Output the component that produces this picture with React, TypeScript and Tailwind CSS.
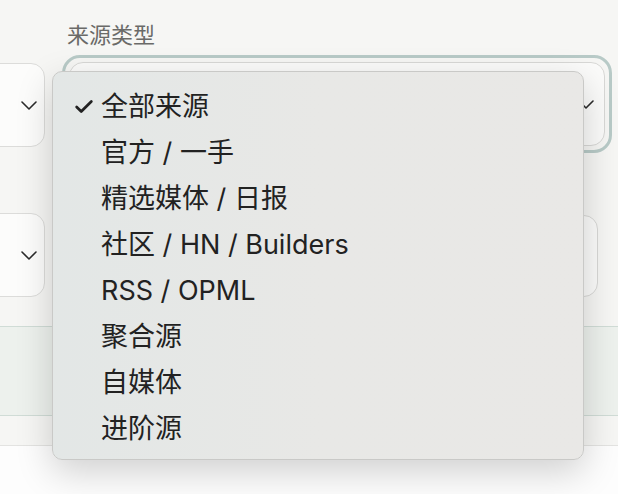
import { Check } from 'lucide-react';

const OPTIONS = [
  '全部来源',
  '官方 / 一手',
  '精选媒体 / 日报',
  '社区 / HN / Builders',
  'RSS / OPML',
  '聚合源',
  '自媒体',
  '进阶源',
];

function Chevron() {
  return (
    <svg width="16" height="9" viewBox="0 0 16 9" fill="none" className="shrink-0">
      <path d="M1 1l7 7 7-7" stroke="#2b2b2b" strokeWidth="1.6" strokeLinecap="round" strokeLinejoin="round" />
    </svg>
  );
}

export default function App() {
  return (
    <div
      className="relative w-[618px] h-[494px] overflow-hidden bg-[#f6f6f4]"
      style={{ fontFamily: 'Inter, "Noto Sans CJK SC", sans-serif' }}
    >
      <div className="pt-[21px] pl-[67px] text-[22px] leading-[28px] text-[#6a6a68]">来源类型</div>

      {/* row 1 */}
      <div className="mt-[6px] flex items-start">
        <div className="mt-[8px] -ml-[40px] w-[85px] h-[84px] rounded-[14px] border border-[#dcdcda] bg-[#fcfcfb] flex items-center justify-end pr-[7px]">
          <Chevron />
        </div>
        <div className="ml-[17px] rounded-[18px] border-[3px] border-[#b8cac7] p-[4px]">
          <div className="w-[536px] h-[84px] rounded-[14px] border border-[#d8d8d6] bg-[#fbfbfa] flex items-center justify-end pr-[10px]">
            <Chevron />
          </div>
        </div>
      </div>

      {/* row 2 */}
      <div className="mt-[60px] flex items-start">
        <div className="-ml-[40px] w-[85px] h-[84px] rounded-[14px] border border-[#dcdcda] bg-[#fcfcfb] flex items-center justify-end pr-[7px]">
          <Chevron />
        </div>
        <div className="ml-[18px] mt-[2px] w-[535px] h-[82px] rounded-[14px] border border-[#d8d8d6] bg-[#fbfbfa]" />
      </div>

      {/* table-ish lines */}
      <div className="mt-[29px] border-t border-[#d0dcd6] h-[89px] bg-[#edf1ed]" />
      <div className="border-t border-[#d0dcd6] h-[30px] bg-[#f6f6f4]" />
      <div className="border-t border-[#e3e3e1] h-[60px] bg-[#fdfdfd]" />

      {/* native select menu */}
      <div className="absolute left-[52px] top-[71px] w-[532px] h-[389px] rounded-[10px] border border-[#c9c9c7] bg-gradient-to-r from-[#e3e7e6] via-[#e8e8e6] to-[#e9e8e6] shadow-[0_12px_36px_rgba(0,0,0,0.18)] pt-[12px]">
        {OPTIONS.map((o, i) => (
          <div key={o} className="h-[46px] flex items-center text-[27px] text-[#222]">
            <div className="w-[48px] flex justify-end pr-[6px]">
              {i === 0 && <Check size={22} strokeWidth={3} color="#222" />}
            </div>
            <span>{o}</span>
          </div>
        ))}
      </div>
    </div>
  );
}
